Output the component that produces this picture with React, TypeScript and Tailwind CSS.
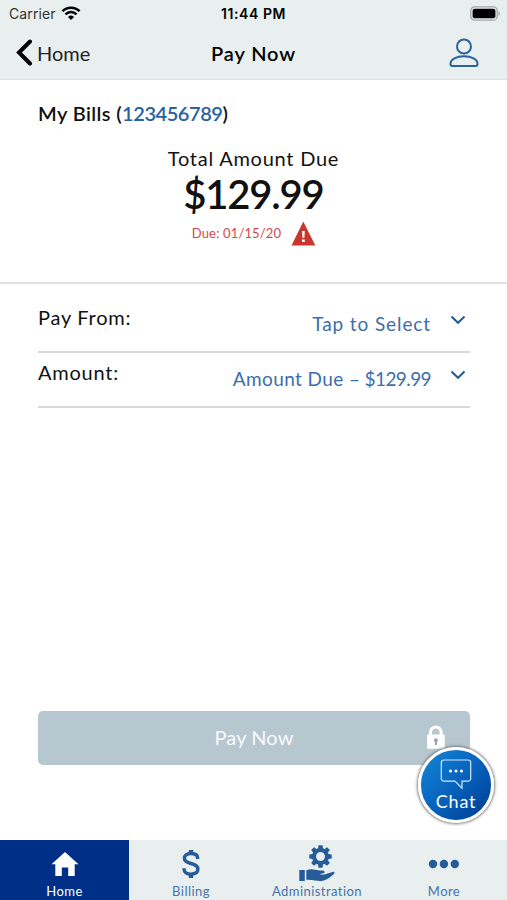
import React from 'react'

interface Tab {
  label: string
  icon: React.ReactNode
  active?: boolean
}

interface BillRow {
  label: string
  value: string
  amount?: string
}

const rows: BillRow[] = [
  { label: 'Pay From:', value: 'Tap to Select' },
  { label: 'Amount:', value: 'Amount Due –', amount: '$129.99' },
]

function WifiIcon() {
  return (
    <svg width="20" height="15" viewBox="0 0 20 15" fill="none" stroke="#000" strokeWidth="2.5">
      <path d="M1.4 5.2a12.2 12.2 0 0 1 17.2 0" />
      <path d="M4.5 8.3a7.8 7.8 0 0 1 11 0" />
      <path d="M7 10.9a4.4 4.4 0 0 1 6 0L10 14z" fill="#000" stroke="none" />
    </svg>
  )
}

function BatteryIcon() {
  return (
    <svg width="31" height="15" viewBox="0 0 31 15">
      <rect x="0.8" y="0.8" width="26.4" height="13.4" rx="4" fill="#e9eeee" stroke="#a3a7a7" strokeWidth="1.3" />
      <rect x="2.6" y="2.7" width="22.8" height="9.6" rx="2" fill="#000" />
      <path d="M28.5 5.2c1.8.6 1.8 4 0 4.6z" fill="#a3a7a7" />
    </svg>
  )
}

function UserIcon() {
  return (
    <svg width="30" height="30" viewBox="0 0 30 30" fill="none" stroke="#2a629d" strokeWidth="2">
      <circle cx="15" cy="8.5" r="7" />
      <path d="M3.2 28C2 28 1.5 27 1.5 25.8 1.5 21.2 7.5 18.3 15 18.3s13.5 2.9 13.5 7.5c0 1.2-.5 2.2-1.7 2.2z" />
    </svg>
  )
}

function WarningIcon() {
  return (
    <svg width="25" height="25" viewBox="0 0 25 25">
      <path d="M12.3.5 24.3 24.5H.5z" fill="#c8372d" />
      <path d="M11 10h2.8l-.4 6.8h-2zM11 18.5h2.8v2.4H11z" fill="#fff" />
    </svg>
  )
}

function ChevronIcon() {
  return (
    <svg width="16" height="10" viewBox="0 0 16 10" fill="none" stroke="#235b91" strokeWidth="2">
      <path d="M1.5 1.5 8 7.8l6.5-6.3" />
    </svg>
  )
}

function LockIcon() {
  return (
    <svg width="20" height="25" viewBox="0 0 20 25">
      <path d="M4.5 12V7.2a5.3 5.3 0 0 1 10.6 0V12" fill="none" stroke="#fff" strokeWidth="3" />
      <rect x="1" y="9.5" width="17.8" height="14.3" rx="1.2" fill="#fff" />
      <path d="M9.9 13.3a2 2 0 0 1 1 3.7v3H8.900v-3a2 2 0 0 1 1-3.700z" fill="#8fa5b0" />
    </svg>
  )
}

function ChatIcon() {
  return (
    <svg width="32" height="31" viewBox="0 0 32 31" fill="none">
      <path
        d="M4 1h24a2.7 2.7 0 0 1 2.7 2.7v15.8a2.7 2.7 0 0 1-2.7 2.7h-6v7l-7-7H4a2.7 2.7 0 0 1-2.7-2.7V3.7A2.7 2.7 0 0 1 4 1z"
        stroke="#cfeaff"
        strokeWidth="1.2"
      />
      <circle cx="10.5" cy="12" r="1.5" fill="#fff" />
      <circle cx="16" cy="12" r="1.5" fill="#fff" />
      <circle cx="21.5" cy="12" r="1.5" fill="#fff" />
    </svg>
  )
}

function HomeIcon() {
  return (
    <svg width="28" height="26" viewBox="0 0 28 26" fill="#fff">
      <path d="M14 1 .5 13.3h3.8V25h6.5v-8.5h6.4V25h6.5V13.3h3.8z" />
    </svg>
  )
}

function DollarIcon() {
  return (
    <svg width="20" height="30" viewBox="0 0 20 30" fill="none" stroke="#245b98" strokeWidth="3.4">
      <path d="M16.6 10V8.8c0-2.6-2.3-4.3-6.6-4.3S3.4 6.500 3.400 9.300c0 3 2.600 4.200 6.600 5.200 4.300 1.100 6.900 2.600 6.900 5.600 0 3.100-2.600 5-6.900 5s-6.900-1.800-6.900-4.700v-1.200" />
      <path d="M10 1v4M10 25v4" strokeWidth="4.4" />
    </svg>
  )
}

function AdministrationIcon() {
  return (
    <svg width="36" height="37" viewBox="0 0 36 37" fill="#245b98">
      <g transform="translate(21.5 11.5)">
        <circle r="6.5" fill="none" stroke="#245b98" strokeWidth="4" />
        {[0, 45, 90, 135, 180, 225, 270, 315].map((angle) => (
          <path key={angle} d="M-2.5-7.5-2-11.2h4l.5 3.7z" transform={`rotate(${angle})`} />
        ))}
      </g>
      <path d="M.3 25h5.500v11H.3z" />
      <path d="M7.300 25.300c3.200-1.400 6.200-1.300 8.700-.5 2 .6 4.200.7 7.200.7 2.200 0 3 1.300 2.100 2.500l-5 1.300c3 .5 5 .3 7.500-.6l5.800-1.800c1.900-.4 2.500.8 1.300 2-3.700 3.500-8.300 6.700-12.600 7.100-3.700.4-8.100-1.500-15-1.200z" />
    </svg>
  )
}

function MoreIcon() {
  return (
    <svg width="32" height="10" viewBox="0 0 32 10" fill="#245b98">
      <circle cx="5" cy="5" r="4.2" />
      <circle cx="15.9" cy="5" r="4.2" />
      <circle cx="26.8" cy="5" r="4.2" />
    </svg>
  )
}

const tabs: Tab[] = [
  { label: 'Home', icon: <HomeIcon />, active: true },
  { label: 'Billing', icon: <DollarIcon /> },
  { label: 'Administration', icon: <AdministrationIcon /> },
  { label: 'More', icon: <MoreIcon /> },
]

function Header() {
  return (
    <header className="h-20 border-b border-[#dde0e0] bg-[#e9eeee] text-black">
      <div className="grid h-[27px] grid-cols-[1fr_auto_1fr] items-center pl-[9px] pr-[6px] font-['Inter',sans-serif] text-[14px]">
        <div className="flex items-center gap-[5px]">
          <span className="text-[#333] tracking-[0.1px]">Carrier</span>
          <WifiIcon />
        </div>
        <span className="pr-[3px] text-center font-semibold tracking-[0.6px]">11:44 PM</span>
        <div className="flex justify-end">
          <BatteryIcon />
        </div>
      </div>
      <div className="grid h-[51px] grid-cols-[1fr_auto_1fr] items-center pl-4 pr-7 text-[20px]">
        <button className="flex items-center gap-1 text-[#222]">
          <svg width="17" height="27" viewBox="0 0 17 27" fill="none" stroke="#000" strokeWidth="4" strokeLinecap="round">
            <path d="M14 2.500 3 13.500l11 11" />
          </svg>
          Home
        </button>
        <h1 className="pl-3 text-center font-semibold tracking-[0.9px]">Pay Now</h1>
        <div className="flex justify-end">
          <UserIcon />
        </div>
      </div>
    </header>
  )
}

function BillSummary() {
  return (
    <section className="h-[204px] border-b-2 border-[#e0e0e0] px-[38px] pt-[19px]">
      <h2 className="text-[20px] leading-7 font-semibold tracking-[0.4px]">
        My Bills (<span className="text-[#2a609f] tracking-[-0.45px]">123456789</span>)
      </h2>
      <div className="mt-[17px] flex flex-col items-center">
        <p className="text-[20px] leading-7 tracking-[0.75px]">Total Amount Due</p>
        <p className="text-[40px] leading-[44px] font-semibold tracking-[-1.2px]">$129.99</p>
        <div className="flex items-center gap-[10px] pt-[5px] pl-px">
          <span className="text-[13px] text-[#d2494c] tracking-[0.15px]">Due: 01/15/20</span>
          <WarningIcon />
        </div>
      </div>
    </section>
  )
}

export default function App() {
  return (
    <div className="flex h-[900px] w-[507px] flex-col bg-white font-['Lato',sans-serif] text-[#111]">
      <Header />
      <BillSummary />

      <div className="flex-1 pr-[37px] pl-[38px] pt-[14px]">
        {rows.map((row) => (
          <div key={row.label} className="flex h-[55px] justify-between border-b-2 border-[#d8d8d8] text-[20px] leading-7">
            <span className="pt-[5px] tracking-[0.75px]">{row.label}</span>
            <button className="flex gap-[19px] pr-1 text-[#3b6eab]">
              <span className={row.amount ? 'pt-[12px] text-[19px] tracking-[0.4px]' : 'pt-[12px] text-[19px] tracking-[0.9px]'}>
                {row.value}
                {row.amount && <span className="tracking-[-0.6px]"> {row.amount}</span>}
              </span>
              <span className="pt-[17px]"><ChevronIcon /></span>
            </button>
          </div>
        ))}
      </div>

      <div className="relative mr-[37px] mb-[75px] ml-[38px]">
        <button className="grid h-[54px] w-full grid-cols-[1fr_auto_1fr] items-center rounded-[5px] bg-[#b7c7cf] px-6 pb-[2px] text-[20px] text-[#f8fafc]">
          <span className="col-start-2 tracking-[0.1px]">Pay Now</span>
          <span className="flex justify-end"><LockIcon /></span>
        </button>
        {/* Floating chat button */}
        <button className="absolute top-[36px] -right-[24px] flex size-[76px] flex-col items-center rounded-full border-[3px] border-white bg-linear-to-br from-[#1687d8] via-[#0862bd] to-[#003a91] pt-[9px] text-white shadow-[0_0_3px_1px_#777]">
          <ChatIcon />
          <span className="text-[18px] leading-[22px] tracking-[0.8px]">Chat</span>
        </button>
      </div>

      <nav className="grid h-[60px] grid-cols-[129px_124px_128px_126px] bg-[#e9eeee] text-[13px] text-[#4674ab]">
        {tabs.map((tab) => (
          <button
            key={tab.label}
            className={tab.active ? 'flex flex-col items-center bg-[#002f87] text-white' : 'flex flex-col items-center'}
          >
            <span className="flex h-[43px] items-center pt-1">{tab.icon}</span>
            <span className="leading-4 tracking-[0.45px]">{tab.label}</span>
          </button>
        ))}
      </nav>
    </div>
  )
}
